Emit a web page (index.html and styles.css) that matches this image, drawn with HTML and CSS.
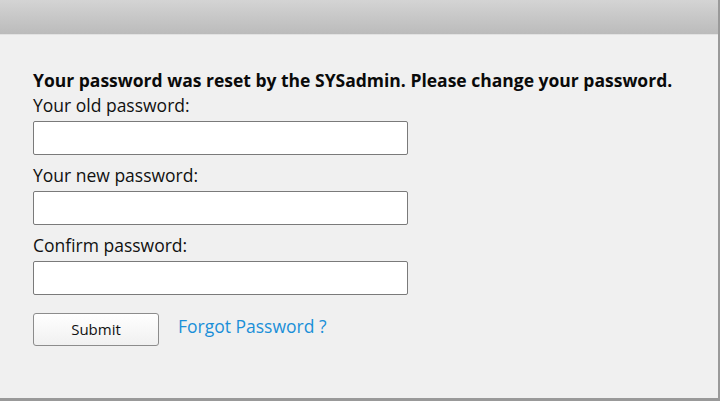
FILE: index.html
```html
<!DOCTYPE html>
<html>
<head>
<meta charset="utf-8">
<link rel="stylesheet" href="styles.css">
</head>
<body>
<div class="panel">
  <div class="titlebar"></div>
  <div class="content">
    <p class="notice">Your password was reset by the SYSadmin. Please change your password.</p>
    <label class="label">Your old password:</label>
    <input class="field" type="password">
    <label class="label">Your new password:</label>
    <input class="field" type="password">
    <label class="label">Confirm password:</label>
    <input class="field" type="password">
    <div class="actions">
      <button class="submit" type="button">Submit</button>
      <a class="forgot" href="#">Forgot Password ?</a>
    </div>
  </div>
</div>
</body>
</html>
```
FILE: styles.css
```css
html, body {
  margin: 0;
  padding: 0;
  background: #ffffff;
}
body {
  font-family: "Open Sans", "Noto Sans", sans-serif;
  color: #111;
}
.panel {
  width: 718px;
  height: 398px;
  background: #f0f0f0;
  border-right: 2px solid #9a9a9a;
  border-bottom: 3px solid #999;
  box-sizing: content-box;
}
.titlebar {
  height: 34px;
  background: linear-gradient(to bottom, #d4d4d4, #bbbbbb);
  border-bottom: 1px solid #e2e2e2;
}
.content {
  padding: 33px 0 0 33px;
  display: flex;
  flex-direction: column;
  align-items: flex-start;
}
.notice {
  margin: 0;
  font-size: 17.5px;
  font-weight: bold;
  line-height: 24px;
  color: #0a0a0a;
}
.label {
  display: block;
  font-size: 17.5px;
  line-height: 24px;
  margin: 1px 0 4px;
  color: #111;
}
.field {
  display: block;
  box-sizing: border-box;
  width: 375px;
  height: 34px;
  margin: 0 0 7px;
  border: 1px solid #7a7a7a;
  border-radius: 2px;
  background: #fff;
  padding: 0 6px;
}
.actions {
  display: flex;
  align-items: center;
  gap: 19px;
  margin-top: 11px;
}
.submit {
  box-sizing: border-box;
  width: 126px;
  height: 33px;
  border: 1px solid #8c8c8c;
  border-radius: 3px;
  background: linear-gradient(to bottom, #ffffff, #f0f0f0);
  font-family: "Open Sans", "Noto Sans", sans-serif;
  font-size: 15px;
  color: #111;
  padding: 0 0 2px;
}
.forgot {
  font-size: 17.5px;
  color: #1a8fd8;
  text-decoration: none;
  margin-top: -8px;
}
```
